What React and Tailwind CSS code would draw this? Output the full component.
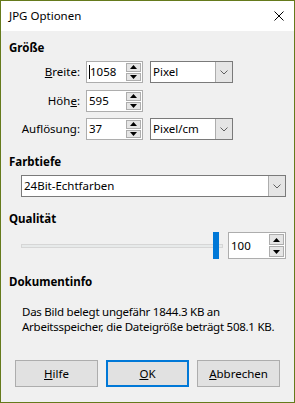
import React from 'react';

const UpArrow = () => (
    <svg width="7" height="4" viewBox="0 0 7 4"><polygon points="0,4 3.5,0 7,4" fill="#000" /></svg>
);
const DownArrow = () => (
    <svg width="7" height="4" viewBox="0 0 7 4"><polygon points="0,0 7,0 3.5,4" fill="#000" /></svg>
);

const SpinBox = ({ value, className, caret }) => (
    <div className={`flex bg-white border border-[#adadad] ${className}`}>
        <div className="flex-1 flex items-center pl-[2px]">
            {caret && <span className="w-[1px] h-[14px] bg-black" />}
            <span>{value}</span>
        </div>
        <div className="flex flex-col gap-[1px] py-[1px] pr-[1px] w-[16px]">
            <div className="flex-1 bg-[#e5e5e5] border border-[#adadad] flex items-center justify-center">
                <UpArrow />
            </div>
            <div className="flex-1 bg-[#e5e5e5] border border-[#adadad] flex items-center justify-center">
                <DownArrow />
            </div>
        </div>
    </div>
);

const Dropdown = ({ value, className }) => (
    <div className={`flex bg-white border border-[#7a7a7a] ${className}`}>
        <div className="flex-1 flex items-center pl-[2px]">{value}</div>
        <div className="w-[17px] bg-[#e5e5e5] border-l border-[#adadad] flex items-center justify-center">
            <svg width="8" height="5" viewBox="0 0 8 5">
                <polyline points="0.5,0.5 4,4 7.5,0.5" fill="none" stroke="#606060" strokeWidth="1" />
            </svg>
        </div>
    </div>
);

const Row = ({ label, children, className }) => (
    <div className={`flex items-center h-[22px] ${className}`}>
        <div className="w-[59px] text-right whitespace-nowrap">{label}</div>
        <div className="ml-[6px] flex gap-[7px] h-full">{children}</div>
    </div>
);

const Button = ({ children, primary }) => (
    <button
        className={`w-[83px] h-[27px] bg-[#e1e1e1] flex items-center justify-center ${
            primary ? 'border-2 border-[#0078d7]' : 'border border-[#adadad]'
        }`}
    >
        {children}
    </button>
);

export default function App() {
    return (
        <div className="w-[295px] h-[403px] border border-[#657a1c] flex flex-col font-['Noto_Sans',sans-serif] text-[11.5px] leading-[16px] text-black overflow-hidden">
            <div className="h-[30px] bg-white flex items-center justify-between pl-[8px] pr-[10px] shrink-0">
                <span>JPG Optionen</span>
                <svg width="10" height="10" viewBox="0 0 10 10">
                    <path d="M0.5 0.5 L9.5 9.5 M9.5 0.5 L0.5 9.5" stroke="#000" strokeWidth="1" />
                </svg>
            </div>
            <div className="flex-1 bg-[#f0f0f0] flex flex-col pl-[8px] pr-[8px]">
                <div className="font-bold mt-[9px]">Größe</div>
                <div className="pl-[12px] flex flex-col mt-[5px]">
                    <Row label={<><u>B</u>reite:</>}>
                        <SpinBox value="1058" caret className="w-[57px]" />
                        <Dropdown value="Pixel" className="w-[83px]" />
                    </Row>
                    <Row label={<>Höh<u>e</u>:</>} className="mt-[7px]">
                        <SpinBox value="595" className="w-[57px]" />
                    </Row>
                    <Row label={<>Auf<u>l</u>ösung:</>} className="mt-[6px]">
                        <SpinBox value="37" className="w-[57px]" />
                        <Dropdown value="Pixel/cm" className="w-[83px]" />
                    </Row>
                </div>

                <div className="font-bold mt-[14px]">Farbtiefe</div>
                <div className="pl-[12px] mt-[5px]">
                    <Dropdown value="24Bit-Echtfarben" className="h-[22px] w-full" />
                </div>

                <div className="font-bold mt-[14px]">Qualität</div>
                <div className="pl-[12px] mt-[5px] flex items-center h-[27px]">
                    <div className="relative w-[202px] h-full flex items-center">
                        <div className="w-full h-[4px] bg-[#e7eaea] border border-[#d6d6d6]" />
                        <div className="absolute left-[192px] top-0 w-[6px] h-[27px] bg-[#0078d7]" />
                    </div>
                    <SpinBox value="100" className="ml-[5px] w-[58px] h-[27px]" />
                </div>

                <div className="font-bold mt-[15px]">Dokumentinfo</div>
                <div className="pl-[13px] mt-[14px] leading-[15px] whitespace-nowrap tracking-[-0.25px]">
                    <div>Das Bild belegt ungefähr 1844.3 KB an</div>
                    <div>Arbeitsspeicher, die Dateigröße beträgt 508.1 KB.</div>
                </div>

                <div className="mt-auto mb-[15px] flex gap-[8px] pl-[6px]">
                    <Button><u>H</u>ilfe</Button>
                    <Button primary><u>O</u>K</Button>
                    <Button><u>A</u>bbrechen</Button>
                </div>
            </div>
        </div>
    );
}
